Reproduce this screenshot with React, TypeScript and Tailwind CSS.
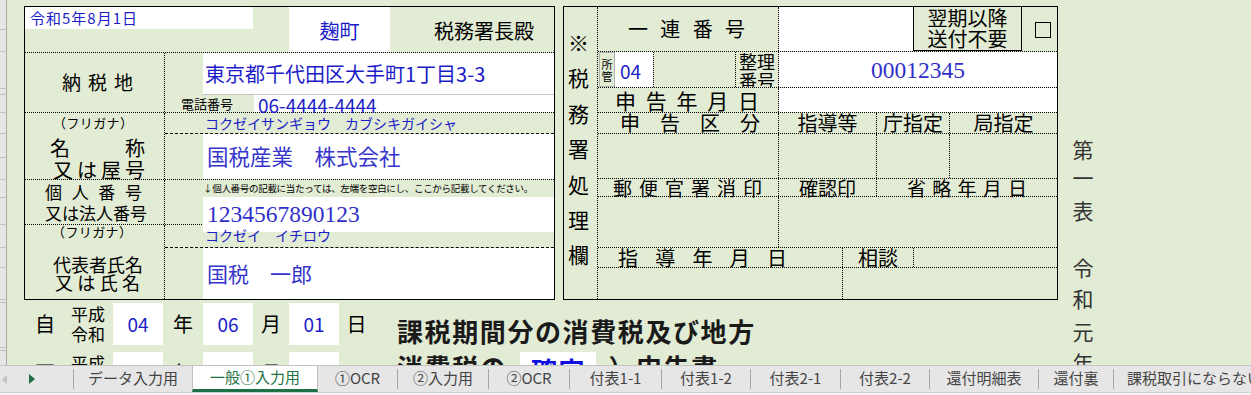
import React from 'react';

const blue = 'text-[#1c1cc8]';
const dot = 'border-dotted border-black';

const Spread = ({ chars, className = '' }: { chars: string; className?: string }) => (
  <div className={`flex justify-between ${className}`}>
    {Array.from(chars).map((c, i) => (
      <span key={i}>{c}</span>
    ))}
  </div>
);

const gutterRows = [
  'h-[30px]', 'h-[22px]', 'h-[37px]', 'h-[6px]', 'h-[18px]', 'h-[21px]', 'h-[24px]', 'h-[22px]',
  'h-[18px]', 'h-[27px]', 'h-[23px]', 'h-[20px]', 'h-[32px]', 'h-[3px]', 'h-[45px]', 'h-[3px]',
];

const RowGutter = () => (
  <div className="w-[7px] shrink-0 bg-[#e6e6e6] border-r border-[#a9a9a9] flex flex-col">
    {gutterRows.map((h, i) => (
      <div key={i} className={`${h} shrink-0 border-b border-[#c2c2c2]`} />
    ))}
  </div>
);

const LeftBox = () => (
  <div className="w-[531px] h-[294px] shrink-0 border border-black flex flex-col">
    {/* 日付・税務署 */}
    <div className={`h-[46px] shrink-0 flex border-b ${dot}`}>
      <div className="w-[264px]">
        <div className={`w-[228px] h-[22px] bg-white pl-[5px] text-[15px] leading-[22px] tracking-[1px] ${blue}`}>
          令和5年8月1日
        </div>
      </div>
      <div className={`w-[101px] bg-white flex items-center justify-center pt-[2px] text-[20px] ${blue}`}>麹町</div>
      <div className="flex-1 pl-[44px] pt-[2px] flex items-center text-[20px]">税務署長殿</div>
    </div>

    {/* 納税地 */}
    <div className={`h-[60px] shrink-0 flex border-b ${dot}`}>
      <div className={`w-[140px] shrink-0 border-r ${dot} flex items-center pl-[37px]`}>
        <Spread chars="納税地" className="w-[71px] text-[19px]" />
      </div>
      <div className="flex-1 flex flex-col">
        <div className={`h-[41px] ml-[38px] bg-white pl-[2px] flex items-center text-[20px] ${blue}`}>
          東京都千代田区大手町1丁目3-3
        </div>
        <div className="h-px ml-[38px] bg-[#c4c4c4]" />
        <div className="h-[17px] flex">
          <div className="w-[89px] pl-[16px] text-[13px] leading-[17px] whitespace-nowrap">電話番号</div>
          <div className={`flex-1 bg-white pl-[4px] pt-[1px] text-[19px] leading-[17px] ${blue}`}>06-4444-4444</div>
        </div>
      </div>
    </div>

    {/* 名称 */}
    <div className={`h-[67px] shrink-0 flex border-b ${dot}`}>
      <div className={`w-[140px] shrink-0 border-r ${dot} flex flex-col`}>
        <Spread chars="（フリガナ）" className="ml-[28px] w-[80px] text-[13px] leading-[20px]" />
        <Spread chars="名称" className="ml-[25px] mt-[4px] w-[95px] text-[20px] leading-[22px]" />
        <Spread chars="又は屋号" className="ml-[28px] w-[92px] text-[20px] leading-[22px]" />
      </div>
      <div className="flex-1 flex flex-col">
        <div className={`h-[21px] shrink-0 border-b border-dashed border-black pl-[40px] text-[14px] leading-[20px] whitespace-nowrap ${blue}`}>
          コクゼイサンギョウ　カブシキガイシャ
        </div>
        <div className={`flex-1 ml-[38px] bg-white pl-[4px] flex items-center text-[21.5px] text-[#3535cc]`}>
          国税産業　株式会社
        </div>
      </div>
    </div>

    {/* 個人番号又は法人番号 */}
    <div className={`h-[45px] shrink-0 flex border-b ${dot}`}>
      <div className={`w-[140px] shrink-0 border-r ${dot} flex flex-col pt-[1px]`}>
        <Spread chars="個人番号" className="ml-[20px] w-[97px] text-[17px] leading-[21px]" />
        <Spread chars="又は法人番号" className="ml-[20px] w-[97px] text-[17px] leading-[21px]" />
      </div>
      <div className="flex-1 flex flex-col">
        <div className="h-[17px] shrink-0 pl-[38px] text-[9.5px] leading-[17px] tracking-[-0.3px] whitespace-nowrap overflow-hidden">
          ↓個人番号の記載に当たっては、左端を空白にし、ここから記載してください。
        </div>
        <div className={`flex-1 ml-[38px] bg-white pl-[4px] flex items-center font-['Liberation_Serif',serif] text-[23.5px] text-[#3030c8]`}>
          1234567890123
        </div>
      </div>
    </div>

    {/* 代表者氏名 */}
    <div className="flex-1 flex">
      <div className={`w-[140px] shrink-0 border-r ${dot} flex flex-col`}>
        <Spread chars="（フリガナ）" className="ml-[27px] w-[80px] text-[13px] leading-[14px]" />
        <Spread chars="代表者氏名" className="ml-[28px] mt-[16px] w-[87px] text-[18px] leading-[18px]" />
        <Spread chars="又は氏名" className="ml-[30px] w-[85px] text-[18px] leading-[18px]" />
      </div>
      <div className="flex-1 flex flex-col">
        <div className={`h-[23px] shrink-0 border-b border-dashed border-black pl-[40px] pt-[1px] text-[14px] leading-[18px] whitespace-nowrap ${blue}`}>
          コクゼイ　イチロウ
        </div>
        <div className={`flex-1 ml-[38px] bg-white pl-[4px] flex items-center text-[21px] text-[#3535cc]`}>
          国税　一郎
        </div>
      </div>
    </div>
  </div>
);

const RightBox = () => (
  <div className="w-[495px] h-[294px] shrink-0 border border-black flex">
    <div className={`w-[34px] shrink-0 border-r ${dot} flex flex-col items-center pr-[4px] pt-[18px] text-[21px] leading-[35.4px]`}>
      {Array.from('※税務署処理欄').map((c, i) => (
        <span key={i}>{c}</span>
      ))}
    </div>
    <div className="flex-1 flex flex-col">
      {/* 一連番号 */}
      <div className={`h-[45px] shrink-0 flex border-b ${dot}`}>
        <div className={`w-[181px] shrink-0 border-r ${dot} flex items-center pl-[30px]`}>
          <Spread chars="一連番号" className="w-[117px] text-[20px]" />
        </div>
        <div className="w-[134px] shrink-0 bg-white" />
        <div className="w-[109px] shrink-0 border-x border-b border-black flex flex-col items-center justify-center text-[20px] leading-[20.5px]">
          <span>翌期以降</span>
          <span>送付不要</span>
        </div>
        <div className="flex-1 pl-[13px] pt-[15px]">
          <div className="w-[16px] h-[16px] border border-black" />
        </div>
      </div>

      {/* 所管・整理番号 */}
      <div className={`h-[36px] shrink-0 flex border-b ${dot}`}>
        <div className={`w-[56px] shrink-0 border-r ${dot} flex pl-[1px]`}>
          <div className="w-[16px] shrink-0 border border-[#b0b0b0] flex flex-col items-center justify-center text-[11px] leading-[12px]">
            <span>所</span>
            <span>管</span>
          </div>
          <div className={`w-[38px] shrink-0 bg-white pl-[5px] pt-[3px] flex items-center text-[19px] ${blue}`}>04</div>
        </div>
        <div className={`w-[82px] shrink-0 border-r ${dot}`} />
        <div className={`w-[43px] shrink-0 border-r ${dot} overflow-hidden flex flex-col items-center text-[18px] leading-[19px]`}>
          <span>整理</span>
          <span>番号</span>
        </div>
        <div className={`flex-1 bg-white pt-[3px] flex items-center justify-center font-['Liberation_Serif',serif] text-[23.5px] text-[#3030c8]`}>
          00012345
        </div>
      </div>

      {/* 申告年月日 */}
      <div className={`h-[25px] shrink-0 flex border-b ${dot}`}>
        <div className={`w-[181px] shrink-0 border-r ${dot} pl-[17px] flex items-center`}>
          <Spread chars="申告年月日" className="w-[144px] text-[21px] leading-[24px]" />
        </div>
        <div className="flex-1 bg-white" />
      </div>

      {/* 申告区分 */}
      <div className={`h-[21px] shrink-0 flex border-b ${dot} text-[20px] leading-[20px]`}>
        <div className={`w-[181px] shrink-0 border-r ${dot} pl-[22px]`}>
          <Spread chars="申告区分" className="w-[140px]" />
        </div>
        <div className={`w-[98px] shrink-0 border-r ${dot} text-center`}>指導等</div>
        <div className={`w-[73px] shrink-0 border-r ${dot} text-center`}>庁指定</div>
        <div className="flex-1 text-center">局指定</div>
      </div>
      <div className={`h-[45px] shrink-0 flex border-b ${dot}`}>
        <div className={`w-[181px] shrink-0 border-r ${dot}`} />
        <div className={`w-[98px] shrink-0 border-r ${dot}`} />
        <div className={`w-[73px] shrink-0 border-r ${dot}`} />
        <div className="flex-1" />
      </div>

      {/* 郵便官署消印 */}
      <div className={`h-[18px] shrink-0 flex border-b ${dot} text-[19px] leading-[17px]`}>
        <div className={`w-[181px] shrink-0 border-r ${dot} pl-[15px]`}>
          <Spread chars="郵便官署消印" className="w-[149px]" />
        </div>
        <div className={`w-[98px] shrink-0 border-r ${dot} text-center`}>確認印</div>
        <div className="flex-1 flex justify-center">
          <Spread chars="省略年月日" className="w-[120px]" />
        </div>
      </div>
      <div className={`h-[51px] shrink-0 flex border-b ${dot}`}>
        <div className={`w-[181px] shrink-0 border-r ${dot}`} />
        <div className="flex-1" />
      </div>

      {/* 指導年月日 */}
      <div className={`h-[20px] shrink-0 flex border-b ${dot} text-[20px] leading-[20px]`}>
        <div className={`w-[245px] shrink-0 border-r ${dot} pl-[20px]`}>
          <Spread chars="指導年月日" className="w-[169px]" />
        </div>
        <div className={`w-[71px] shrink-0 border-r ${dot} text-center`}>相談</div>
        <div className="flex-1" />
      </div>
      <div className="flex-1 flex">
        <div className={`w-[245px] shrink-0 border-r ${dot}`} />
        <div className="flex-1" />
      </div>
    </div>
  </div>
);

const PeriodRow = ({ first, values }: { first: string; values: string[] }) => (
  <div className="h-[42px] shrink-0 flex items-center text-[20px]">
    <div className="w-[28px] text-center">{first}</div>
    <div className="w-[54px] pl-[12px] flex flex-col text-[17px] leading-[20px]">
      <span>平成</span>
      <span>令和</span>
    </div>
    <div className={`w-[50px] h-full bg-white flex items-center justify-center text-[19px] ${blue}`}>{values[0]}</div>
    <div className="w-[40px] text-center">年</div>
    <div className={`w-[50px] h-full bg-white flex items-center justify-center text-[19px] ${blue}`}>{values[1]}</div>
    <div className="w-[36px] text-center">月</div>
    <div className={`w-[50px] h-full bg-white flex items-center justify-center text-[19px] ${blue}`}>{values[2]}</div>
    <div className="w-[35px] text-center">日</div>
  </div>
);

const PeriodArea = () => (
  <div className="flex mt-[3px] h-[62px] overflow-hidden">
    <div className="ml-[7px] flex flex-col gap-[7px]">
      <PeriodRow first="自" values={['04', '06', '01']} />
      <PeriodRow first="至" values={['', '', '']} />
    </div>
    <div className="ml-[23px] mt-[10px] font-bold text-[26px] leading-[36px] tracking-[1.6px] text-[#1a1a1a] whitespace-nowrap">
      <div>課税期間分の消費税及び地方</div>
      <div className="flex items-start">
        <span>消費税の</span>
        <span className="ml-[13px] mt-[3px] w-[76px] h-[32px] bg-white text-center text-[#1010e0]">確定</span>
        <span className="ml-[12px]">）申告書</span>
      </div>
    </div>
  </div>
);

const VerticalTitle = () => (
  <div className="w-[50px] shrink-0 flex flex-col items-center text-[21px] leading-[20px] text-[#333]">
    <div className="mt-[139px]">第</div>
    <div className="mt-[8px]">一</div>
    <div className="mt-[13px]">表</div>
    <div className="mt-[37px]">令</div>
    <div className="mt-[11px]">和</div>
    <div className="mt-[13px]">元</div>
    <div className="mt-[11px]">年</div>
  </div>
);

const Sep = () => <div className="w-px h-[20px] shrink-0 self-center bg-[#a6a6a6]" />;

const tabs: { name: string; w: string }[] = [
  { name: '②入力用', w: 'w-[90px]' },
  { name: '②OCR', w: 'w-[80px]' },
  { name: '付表1-1', w: 'w-[91px]' },
  { name: '付表1-2', w: 'w-[88px]' },
  { name: '付表2-1', w: 'w-[89px]' },
  { name: '付表2-2', w: 'w-[88px]' },
  { name: '還付明細表', w: 'w-[108px]' },
  { name: '還付裏', w: 'w-[74px]' },
];

const SheetTabs = () => (
  <div className="h-[30px] shrink-0 flex flex-col">
    <div className="h-[27px] shrink-0 bg-[#e6e6e6] border-t border-[#c3c3c3] flex text-[15px] text-[#444] whitespace-nowrap">
      <div className="w-[73px] shrink-0 flex items-center">
        <svg width="6" height="9" viewBox="0 0 6 9" className="ml-[2px]">
          <polygon points="5,0 5,9 0,4.5" fill="#c4c4c4" />
        </svg>
        <svg width="6" height="10" viewBox="0 0 6 10" className="ml-[21px]">
          <polygon points="0,0 0,10 6,5" fill="#1e6b40" />
        </svg>
      </div>
      <Sep />
      <div className="w-[118px] shrink-0 flex items-center justify-center pb-[2px]">データ入力用</div>
      <div className="w-[126px] shrink-0 bg-white border-x border-b-[3px] border-x-[#c0c0c0] border-b-[#1e7145] flex items-center justify-center text-[#1e7145]">
        一般①入力用
      </div>
      <div className="w-[79px] shrink-0 flex items-center justify-center pb-[2px]">①OCR</div>
      {tabs.map((t) => (
        <React.Fragment key={t.name}>
          <Sep />
          <div className={`${t.w} shrink-0 flex items-center justify-center pb-[2px]`}>{t.name}</div>
        </React.Fragment>
      ))}
      <Sep />
      <div className="flex-1 flex items-center pl-[13px] pb-[2px] overflow-hidden">課税取引にならない取引</div>
    </div>
    <div className="flex-1 bg-[#f3f3f3] border-t border-[#cfcfcf]" />
  </div>
);

export default function App() {
  return (
    <div className="w-[1251px] h-[395px] overflow-hidden flex flex-col bg-[#e2ebd3] text-black font-['Noto_Sans_CJK_JP','Noto_Sans',sans-serif]">
      <div className="h-[365px] shrink-0 flex overflow-hidden">
        <RowGutter />
        <div className="w-[1051px] shrink-0 pl-[17px] pt-[6px] flex flex-col">
          <div className="flex gap-[8px]">
            <LeftBox />
            <RightBox />
          </div>
          <PeriodArea />
        </div>
        <VerticalTitle />
      </div>
      <SheetTabs />
    </div>
  );
}
